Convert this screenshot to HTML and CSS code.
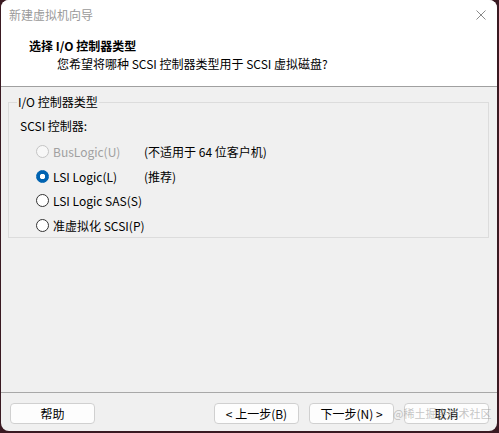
FILE: index.html
```html
<!DOCTYPE html>
<html lang="zh-CN">
<head>
<meta charset="utf-8">
<title>新建虚拟机向导</title>
<link rel="stylesheet" href="styles.css">
</head>
<body>
<div class="window">
  <div class="titlebar">
    <span class="title">新建虚拟机向导</span>
    <svg class="close" width="10" height="10" viewBox="0 0 10 10"><path d="M0.5 0.5 L9.5 9.5 M9.5 0.5 L0.5 9.5" stroke="#8a8a8a" stroke-width="1" fill="none"/></svg>
  </div>
  <div class="header">
    <div class="h-title">选择 I/O 控制器类型</div>
    <div class="h-sub">您希望将哪种 SCSI 控制器类型用于 SCSI 虚拟磁盘?</div>
  </div>
  <div class="content">
    <fieldset class="group">
      <legend>I/O 控制器类型</legend>
      <div class="sublabel">SCSI 控制器:</div>
      <div class="row disabled"><span class="radio"></span><span class="opt">BusLogic(U)</span><span class="note">(不适用于 64 位客户机)</span></div>
      <div class="row"><span class="radio checked"></span><span class="opt">LSI Logic(L)</span><span class="note">(推荐)</span></div>
      <div class="row"><span class="radio"></span><span class="opt">LSI Logic SAS(S)</span></div>
      <div class="row"><span class="radio"></span><span class="opt">准虚拟化 SCSI(P)</span></div>
    </fieldset>
  </div>
  <div class="footer">
    <button class="btn">帮助</button>
    <div class="spacer"></div>
    <button class="btn">&lt; 上一步(B)</button>
    <button class="btn">下一步(N) &gt;</button>
    <button class="btn cancel">取消</button>
    <span class="watermark">@稀土掘金技术社区</span>
  </div>
</div>
</body>
</html>
```
FILE: styles.css
```css
html, body {
  margin: 0;
  padding: 0;
}
body {
  width: 499px;
  height: 433px;
  background: #3a1a22;
  font-family: "Noto Sans CJK SC", "Noto Sans", sans-serif;
  font-size: 12px;
  color: #000;
  overflow: hidden;
}
.window {
  box-sizing: border-box;
  margin: 0 2px 0 1px;
  height: 431px;
  background: #f0f0f0;
  border-radius: 8px;
  overflow: hidden;
  display: flex;
  flex-direction: column;
  position: relative;
}
.titlebar {
  height: 31px;
  background: #fff;
  display: flex;
  align-items: center;
  justify-content: space-between;
  padding: 0 10px 2px 8px;
  box-sizing: border-box;
}
.title {
  color: #9a9a9a;
  font-size: 12px;
}
.close {
  margin-right: 1px;
}
.header {
  background: #fff;
  height: 56px;
  border-bottom: 1px solid #a0a0a0;
  box-sizing: border-box;
  padding-top: 6px;
}
.h-title {
  font-weight: bold;
  padding-left: 28px;
  line-height: 17px;
}
.h-sub {
  padding-left: 56px;
  line-height: 17px;
  margin-top: 1px;
}
.content {
  padding: 7px 8px 0 7px;
  height: 152px;
}
.group {
  margin: 0;
  border: 1px solid #dcdcdc;
  border-radius: 0;
  padding: 2px 0 0 11px;
  height: 144px;
  box-sizing: border-box;
}
.group legend {
  padding: 0 1px;
  margin-left: -3px;
  line-height: 16px;
}
.sublabel {
  line-height: 17px;
  margin-top: 5px;
  margin-bottom: 5px;
}
.row {
  display: flex;
  align-items: center;
  height: 24.7px;
  padding-left: 16px;
  white-space: nowrap;
}
.radio {
  width: 11px;
  height: 11px;
  border: 1px solid #333;
  border-radius: 50%;
  box-sizing: content-box;
  margin-right: 4px;
  background: #fff;
  flex: none;
}
.radio.checked {
  border: 1px solid #0063b1;
  background: radial-gradient(circle, #fff 0 2.5px, #0063b1 3px);
}
.disabled .radio {
  border-color: #c4c4c4;
  background: #f7f7f7;
}
.disabled .opt {
  color: #a0a0a0;
}
.opt {
  min-width: 91px;
}
.footer {
  margin-top: auto;
  border-top: 1px solid #a8a8a8;
  height: 39px;
  box-sizing: border-box;
  display: flex;
  align-items: flex-start;
  padding: 10px 0 0 9px;
  gap: 10px;
  position: relative;
}
.spacer {
  flex: 1;
}
.btn {
  width: 85px;
  height: 21px;
  background: #fdfdfd;
  border: 1px solid #d0d0d0;
  border-radius: 4px;
  font-family: inherit;
  font-size: 12px;
  color: #000;
  padding: 0;
  line-height: 19px;
}
.cancel {
  margin-right: 8px;
}
.watermark {
  position: absolute;
  left: 392px;
  top: 11px;
  font-size: 11px;
  line-height: 19px;
  color: rgba(150, 150, 150, 0.55);
  pointer-events: none;
}
```
